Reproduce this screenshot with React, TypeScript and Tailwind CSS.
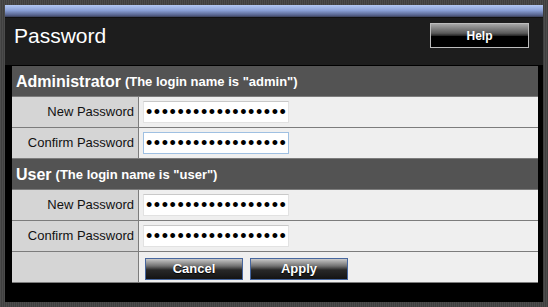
import React from "react";

const labelCls =
  "flex items-center justify-end pr-[4px] bg-[#d5d5d5] text-[13px] text-[#111]";

function PwInput({ focused }: { focused?: boolean }) {
  return (
    <input
      type="password"
      readOnly
      defaultValue="abcdefghijklmnopqr"
      className={`w-[146px] h-[22px] bg-white pl-[2px] pr-0 text-[18px] tracking-[1.55px] text-black outline-none font-['Liberation_Sans',Arial,sans-serif] border ${
        focused ? "border-[#9fc0e2]" : "border-[#e2e2e2] border-t-[#c9c9c9]"
      }`}
    />
  );
}

function FieldRow({ label, focused }: { label: string; focused?: boolean }) {
  return (
    <div className="grid h-[30px] grid-cols-[126px_399px] gap-px">
      <div className={labelCls}>{label}</div>
      <div className="flex items-center bg-[#efefef] pl-[4px]">
        <PwInput focused={focused} />
      </div>
    </div>
  );
}

function Header({ name, login }: { name: string; login: string }) {
  return (
    <div className="flex h-[30px] items-center bg-[#535353] pl-[4px] pt-px font-bold text-white">
      <span className="text-[16px]">{name}</span>
      <span className="ml-[4px] text-[13px]">(The login name is "{login}")</span>
    </div>
  );
}

function Btn({ children }: { children: React.ReactNode }) {
  return (
    <button className="h-[22px] w-[98px] border border-[#46669e] bg-[linear-gradient(to_bottom,#c8c8c8_0%,#727272_35%,#282828_55%,#141414_100%)] text-[13px] font-bold leading-none text-white [text-shadow:0_1px_1px_#000] font-['Liberation_Sans',Arial,sans-serif]">
      {children}
    </button>
  );
}

export default function App() {
  return (
    <div className="h-[307px] w-[548px] bg-[#464646] bg-[repeating-linear-gradient(90deg,#4c4c4c_0px,#4c4c4c_1px,#3f3f3f_1px,#3f3f3f_2px)] p-[5px] font-['Liberation_Sans',Arial,sans-serif]">
      <div className="flex h-full flex-col">
        <div className="h-[12px] bg-[linear-gradient(to_bottom,#b3c8f4_0%,#8aa0d6_45%,#56628c_85%,#3a3f55_100%)]" />
        <div className="flex h-[48px] items-start justify-between border-t border-[#111] bg-[#1d1d1d] pl-[9px] pr-[14px]">
          <h1 className="mt-[7px] text-[21px] leading-none text-white">Password</h1>
          <button className="mt-[5px] h-[25px] w-[99px] border border-[#bdbdbd] bg-[linear-gradient(to_bottom,#a8a8a8_0%,#5a5a5a_40%,#2a2a2a_50%,#000_51%,#000_100%)] text-[12px] font-bold text-white font-['Liberation_Sans',Arial,sans-serif]">
            Help
          </button>
        </div>
        <div className="flex-1 bg-black pb-[19px] pl-[7px] pr-[5px] pt-px">
          <div className="flex flex-col gap-px border-b border-[#7c7c7c] bg-[#7c7c7c]">
            <Header name="Administrator" login="admin" />
            <FieldRow label="New Password" />
            <FieldRow label="Confirm Password" focused />
            <Header name="User" login="user" />
            <FieldRow label="New Password" />
            <FieldRow label="Confirm Password" />
            <div className="grid h-[30px] grid-cols-[126px_399px] gap-px">
              <div className="bg-[#d5d5d5]" />
              <div className="flex items-center gap-[7px] bg-[#efefef] pl-[6px] pt-[3px]">
                <Btn>Cancel</Btn>
                <Btn>Apply</Btn>
              </div>
            </div>
          </div>
        </div>
      </div>
    </div>
  );
}
